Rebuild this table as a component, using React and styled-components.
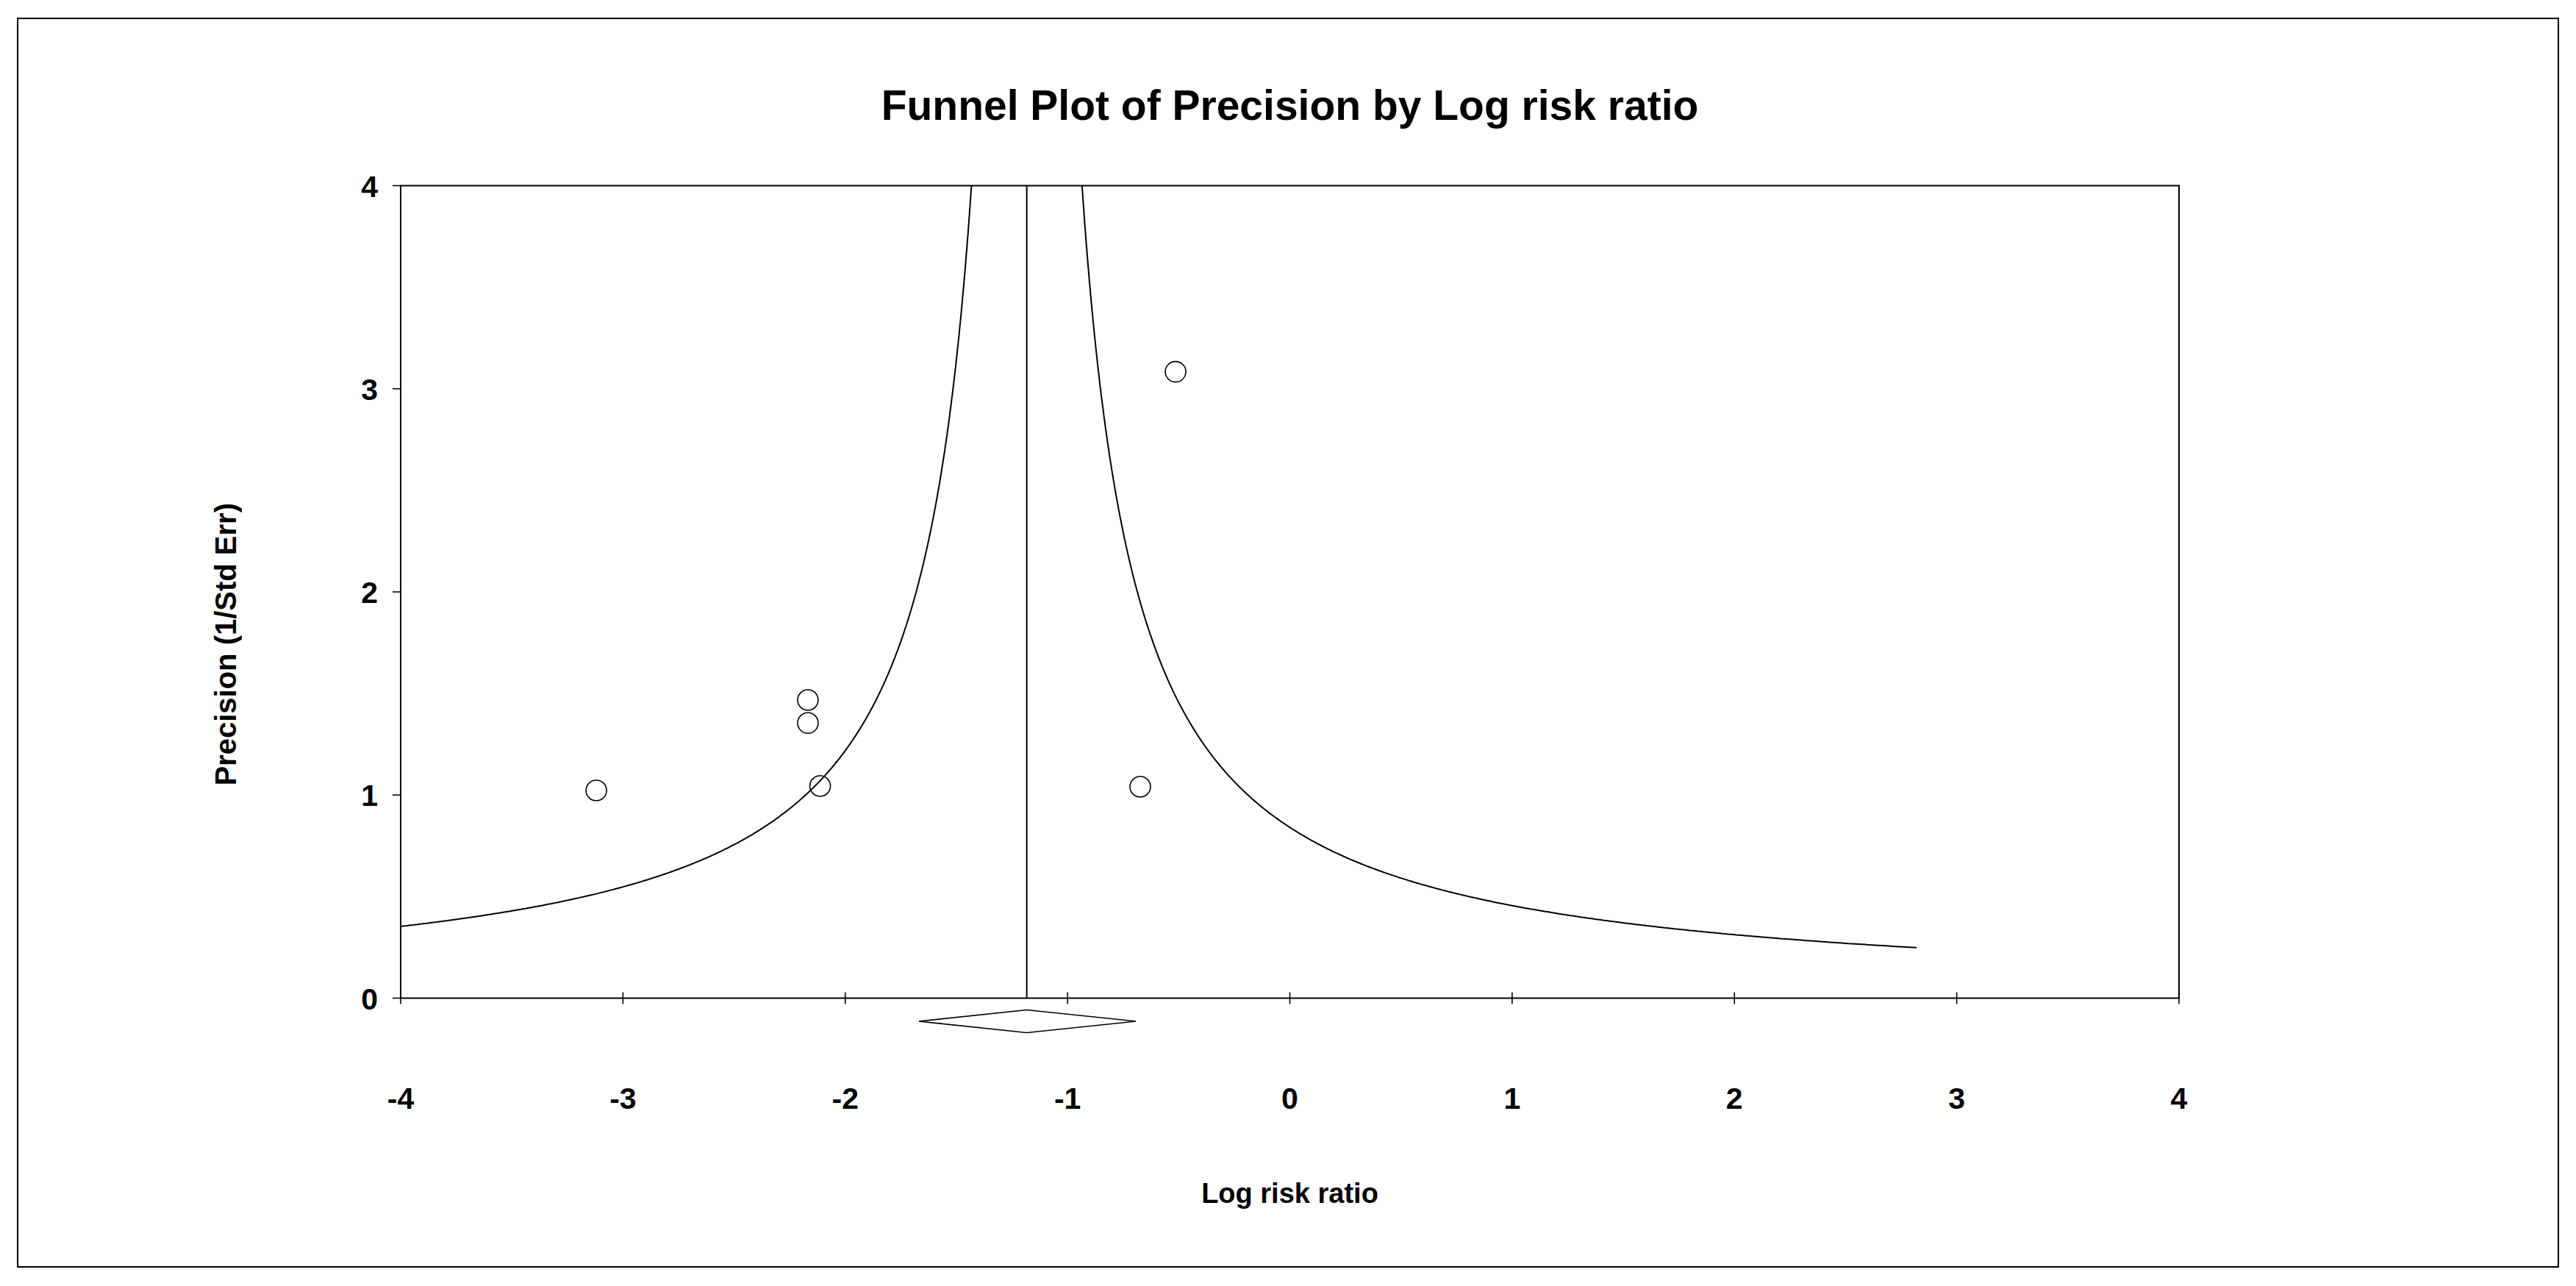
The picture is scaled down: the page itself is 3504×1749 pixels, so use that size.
import React from 'react'
import styled, { createGlobalStyle } from 'styled-components'

const GlobalStyle = createGlobalStyle`
  html, body {
    margin: 0;
    padding: 0;
    background: #fff;
  }
  body {
    font-family: "Liberation Sans", Arial, sans-serif;
    color: #000;
  }
`

// plot area in page pixels
const LEFT = 545
const RIGHT = 2964
const TOP = 252.5
const BOTTOM = 1357.5
const px = (x) => LEFT + ((x + 4) / 8) * (RIGHT - LEFT)
const py = (y) => BOTTOM - (y / 4) * (BOTTOM - TOP)

const CENTER = -1.1835
const K = 0.995
const YMIN = 0.2486

const studies = [
  [-3.12, 1.0226],
  [-2.168, 1.468],
  [-2.168, 1.3546],
  [-2.113, 1.0443],
  [-0.673, 1.0407],
  [-0.514, 3.0838],
]

const funnel = (sign) => {
  const from = sign < 0 ? K / (CENTER + 4) : YMIN
  const pts = []
  const n = 700
  for (let i = 0; i <= n; i++) {
    const y = from * Math.pow(4 / from, i / n)
    const x = CENTER + (sign * K) / y
    pts.push(`${px(x).toFixed(1)},${py(y).toFixed(1)}`)
  }
  return pts.join(' ')
}

const App = () => {
  const xTicks = [-4, -3, -2, -1, 0, 1, 2, 3, 4]
  const yTicks = [0, 1, 2, 3, 4]
  const cx = px(CENTER)

  return (
    <Page>
      <GlobalStyle />
      <Frame>
        <Title>Funnel Plot of Precision by Log risk ratio</Title>
        <YTitle>Precision (1/Std Err)</YTitle>
        <Chart viewBox="460 225 2589 1310" width="2589" height="1310">
          <PlotBox x={LEFT} y={TOP} width={RIGHT - LEFT} height={BOTTOM - TOP} />
          {yTicks.map((t) => (
            <g key={'y' + t}>
              <Tick x1={LEFT - 11} x2={LEFT} y1={py(t)} y2={py(t)} />
              <TickLabel x={514} y={py(t) + 15} textAnchor="end">{t}</TickLabel>
            </g>
          ))}
          {xTicks.map((t) => (
            <g key={'x' + t}>
              <Tick x1={px(t)} x2={px(t)} y1={BOTTOM - 8} y2={BOTTOM + 8} />
              <TickLabel x={px(t)} y={1508} textAnchor="middle">{t}</TickLabel>
            </g>
          ))}
          <MeanLine x1={cx} x2={cx} y1={TOP} y2={BOTTOM} />
          <Curve points={funnel(-1)} />
          <Curve points={funnel(1)} />
          {studies.map(([x, y], i) => (
            <Study key={i} cx={px(x)} cy={py(y)} r={14} />
          ))}
          <Diamond points={`1250,1389 ${cx},1373.5 1545,1389 ${cx},1404.5`} />
        </Chart>
        <XTitle>Log risk ratio</XTitle>
      </Frame>
    </Page>
  )
}

export default App

const Page = styled.div`
  width: 3504px;
  height: 1749px;
  box-sizing: border-box;
  padding: 24px 0 0 23px;
`

const Frame = styled.div`
  width: 3458px;
  height: 1700px;
  box-sizing: border-box;
  border: 2px solid #000;
  display: grid;
  grid-template-columns: 435px 2589px 1fr;
  grid-template-rows: auto auto 1fr;
`

const Title = styled.h1`
  grid-column: 2;
  grid-row: 1;
  margin: 88.5px 0 0;
  font-size: 57px;
  line-height: 57px;
  font-weight: 700;
  text-align: center;
  white-space: nowrap;
`

const YTitle = styled.div`
  grid-column: 1;
  grid-row: 1 / -1;
  align-self: center;
  justify-self: start;
  margin: 4px 0 0 261.5px;
  writing-mode: vertical-rl;
  transform: rotate(180deg);
  font-size: 40px;
  line-height: 40px;
  font-weight: 700;
  white-space: nowrap;
`

const Chart = styled.svg`
  grid-column: 2;
  grid-row: 2;
  display: block;
  margin-top: 53.5px;
  overflow: visible;
`

const XTitle = styled.div`
  grid-column: 2;
  grid-row: 3;
  margin-top: 69px;
  font-size: 38px;
  line-height: 38px;
  font-weight: 700;
  text-align: center;
`

const PlotBox = styled.rect`
  fill: none;
  stroke: #000;
  stroke-width: 2;
`

const Tick = styled.line`
  stroke: #000;
  stroke-width: 1.6;
`

const TickLabel = styled.text`
  font-family: "Liberation Sans", Arial, sans-serif;
  font-size: 41px;
  font-weight: 700;
  fill: #000;
`

const MeanLine = styled.line`
  stroke: #000;
  stroke-width: 2;
`

const Curve = styled.polyline`
  fill: none;
  stroke: #000;
  stroke-width: 2;
`

const Study = styled.circle`
  fill: none;
  stroke: #000;
  stroke-width: 1.6;
`

const Diamond = styled.polygon`
  fill: none;
  stroke: #000;
  stroke-width: 1.6;
`
